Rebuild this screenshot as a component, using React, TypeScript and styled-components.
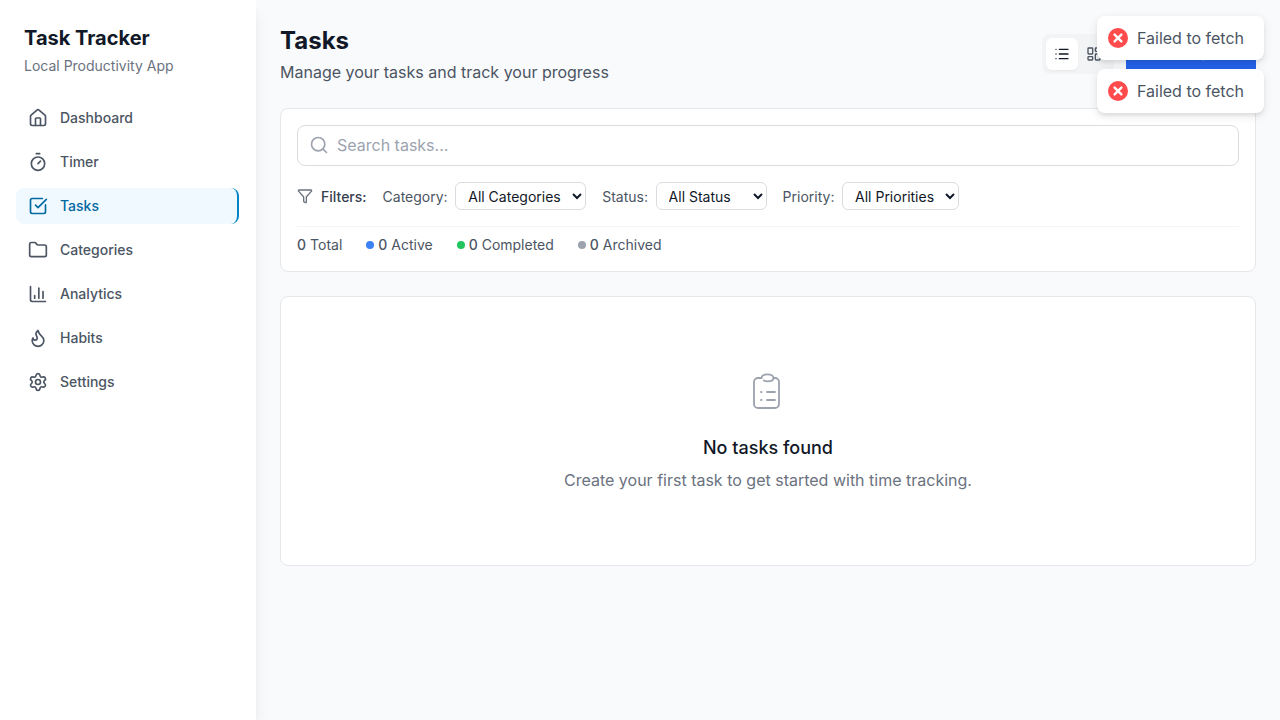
import React from "react";
import styled, { createGlobalStyle } from "styled-components";
import {
  BarChart3,
  CheckSquare,
  Filter,
  Flame,
  Folder,
  Home,
  LayoutDashboard,
  List,
  Search,
  Settings,
  Timer,
} from "lucide-react";

const navItems = [
  { label: "Dashboard", icon: Home },
  { label: "Timer", icon: Timer },
  { label: "Tasks", icon: CheckSquare, active: true },
  { label: "Categories", icon: Folder },
  { label: "Analytics", icon: BarChart3 },
  { label: "Habits", icon: Flame },
  { label: "Settings", icon: Settings },
];

const filters = [
  { label: "Category:", options: ["All Categories", "Work", "Personal"] },
  { label: "Status:", options: ["All Status", "Active", "Completed", "Archived"] },
  { label: "Priority:", options: ["All Priorities", "High", "Medium", "Low"] },
];

const stats = [
  { label: "Active", color: "#3b82f6" },
  { label: "Completed", color: "#22c55e" },
  { label: "Archived", color: "#9ca3af" },
];

function EmptyIcon() {
  return (
    <svg width="40" height="40" viewBox="0 0 40 40" fill="none" stroke="#9ca3af" strokeWidth="1.8" strokeLinecap="round">
      <path d="M13.5 7H10a4 4 0 0 0-4 4v22a4 4 0 0 0 4 4h17a4 4 0 0 0 4-4V11a4 4 0 0 0-4-4h-1.5" />
      <path d="M13.5 7c0-2.2 2.7-3.7 6-3.7s6 1.5 6 3.7-2.7 3.4-6 3.4c-1.6 0-3-.4-3.6-1" />
      <path d="M13 21h.6M13 29h.6M19 21h8M19 29h8" />
    </svg>
  );
}

export default function App() {
  return (
    <Layout>
      <GlobalStyle />
      <Sidebar>
        <Brand>
          <BrandName>Task Tracker</BrandName>
          <BrandTag>Local Productivity App</BrandTag>
        </Brand>
        <Nav>
          {navItems.map(({ label, icon: Icon, active }) => (
            <NavItem key={label} $active={active}>
              <Icon size={20} />
              {label}
            </NavItem>
          ))}
        </Nav>
      </Sidebar>

      <Main>
        <Header>
          <div>
            <Title>Tasks</Title>
            <Subtitle>Manage your tasks and track your progress</Subtitle>
          </div>
          <Actions>
            <ViewToggle>
              <ViewButton $active>
                <List size={16} />
              </ViewButton>
              <ViewButton>
                <LayoutDashboard size={16} />
              </ViewButton>
            </ViewToggle>
            <NewTaskButton>New Task</NewTaskButton>
          </Actions>
        </Header>

        <Card>
          <SearchBox>
            <SearchIcon size={20} />
            <SearchInput placeholder="Search tasks..." />
          </SearchBox>
          <FilterRow>
            <FilterTitle>
              <Filter size={16} color="#6b7280" />
              Filters:
            </FilterTitle>
            {filters.map((f) => (
              <FilterField key={f.label}>
                {f.label}
                <Select>
                  {f.options.map((o) => (
                    <option key={o}>{o}</option>
                  ))}
                </Select>
              </FilterField>
            ))}
          </FilterRow>
          <StatsRow>
            <Stat>
              <Count>0</Count> Total
            </Stat>
            {stats.map((s) => (
              <Stat key={s.label}>
                <Dot $color={s.color} />
                <span>
                  <Count>0</Count> {s.label}
                </span>
              </Stat>
            ))}
          </StatsRow>
        </Card>

        <EmptyCard>
          <EmptyIcon />
          <EmptyTitle>No tasks found</EmptyTitle>
          <EmptyText>Create your first task to get started with time tracking.</EmptyText>
        </EmptyCard>
      </Main>

      <Toasts>
        {[0, 1].map((i) => (
          <Toast key={i}>
            <ToastIcon viewBox="0 0 20 20">
              <circle cx="10" cy="10" r="10" fill="#ff4b4b" />
              <path d="M6.6 6.6l6.8 6.8M13.4 6.6l-6.8 6.8" stroke="#fff" strokeWidth="2.4" strokeLinecap="round" />
            </ToastIcon>
            Failed to fetch
          </Toast>
        ))}
      </Toasts>
    </Layout>
  );
}

const GlobalStyle = createGlobalStyle`
  html, body {
    margin: 0;
    padding: 0;
    background: #f9fafb;
    font-family: Inter, "Liberation Sans", sans-serif;
  }
  * {
    box-sizing: border-box;
  }
`;

const Layout = styled.div`
  position: relative;
  display: flex;
  height: 720px;
  overflow: hidden;
`;

const Sidebar = styled.aside`
  width: 256px;
  flex-shrink: 0;
  background: #fff;
  box-shadow: 0 10px 15px -3px rgba(0, 0, 0, 0.1), 0 4px 6px -4px rgba(0, 0, 0, 0.1);
`;

const Brand = styled.div`
  padding: 24px 24px 0;
`;

const BrandName = styled.h1`
  margin: 0;
  font-size: 20px;
  line-height: 28px;
  font-weight: 700;
  color: #111827;
`;

const BrandTag = styled.p`
  margin: 4px 0 0;
  font-size: 14px;
  line-height: 20px;
  color: #6b7280;
`;

const Nav = styled.nav`
  display: flex;
  flex-direction: column;
  gap: 8px;
  padding: 24px 16px 0;
`;

const NavItem = styled.a<{ $active?: boolean }>`
  display: flex;
  align-items: center;
  gap: 12px;
  height: 36px;
  padding: 0 12px;
  border-radius: 8px;
  font-size: 14px;
  line-height: 20px;
  font-weight: 500;
  color: ${(p) => (p.$active ? "#0369a1" : "#4b5563")};
  background: ${(p) => (p.$active ? "#f0f9ff" : "transparent")};
  border-right: ${(p) => (p.$active ? "2px solid #0284c7" : "none")};
  margin-right: 1px;
`;

const Main = styled.main`
  flex: 1;
  min-width: 0;
  padding: 24px;
`;

const Header = styled.header`
  display: flex;
  align-items: center;
  justify-content: space-between;
  margin-bottom: 24px;
`;

const Title = styled.h2`
  margin: 0;
  font-size: 24px;
  line-height: 34px;
  font-weight: 700;
  color: #111827;
`;

const Subtitle = styled.p`
  margin: 2px 0 0;
  font-size: 16px;
  line-height: 24px;
  color: #4b5563;
`;

const Actions = styled.div`
  display: flex;
  align-items: center;
  gap: 12px;
`;

const ViewToggle = styled.div`
  display: flex;
  padding: 4px;
  border-radius: 8px;
  background: #f3f4f6;
`;

const ViewButton = styled.button<{ $active?: boolean }>`
  display: flex;
  align-items: center;
  justify-content: center;
  width: 32px;
  height: 32px;
  padding: 0;
  border: none;
  border-radius: 6px;
  color: ${(p) => (p.$active ? "#111827" : "#4b5563")};
  background: ${(p) => (p.$active ? "#fff" : "transparent")};
  box-shadow: ${(p) => (p.$active ? "0 1px 2px rgba(0, 0, 0, 0.05)" : "none")};
`;

const NewTaskButton = styled.button`
  width: 130.4px;
  height: 30px;
  border: none;
  background: #2563eb;
  color: #fff;
  font: 500 14px Inter, sans-serif;
`;

const Card = styled.section`
  padding: 16px;
  background: #fff;
  border: 1px solid #e5e7eb;
  border-radius: 8px;
`;

const SearchBox = styled.div`
  position: relative;
`;

const SearchIcon = styled(Search)`
  position: absolute;
  left: 12px;
  top: 10px;
  color: #9ca3af;
`;

const SearchInput = styled.input`
  display: block;
  width: 100%;
  height: 41px;
  padding: 0 12px 2px 39px;
  border: 1px solid #d9dce1;
  border-radius: 8px;
  font: 400 16px Inter, sans-serif;
  outline: none;
  &::placeholder {
    color: #9ca3af;
  }
`;

const FilterRow = styled.div`
  display: flex;
  align-items: center;
  gap: 16px;
  margin-top: 16px;
  font-size: 14px;
`;

const FilterTitle = styled.div`
  display: flex;
  align-items: center;
  gap: 8px;
  font-weight: 500;
  color: #374151;
`;

const FilterField = styled.label`
  display: flex;
  align-items: center;
  gap: 7.6px;
  color: #4b5563;
`;

const Select = styled.select`
  height: 28px;
  padding: 0 8px 0 8px;
  border: 1px solid #d9dce1;
  border-radius: 6px;
  background: #fff;
  color: #111827;
  font: 400 14px Inter, sans-serif;
`;

const StatsRow = styled.div`
  display: flex;
  align-items: center;
  gap: 24px;
  margin-top: 16px;
  padding-top: 8px;
  border-top: 1px solid #f3f4f6;
  font-size: 14px;
  line-height: 20px;
  color: #4b5563;
`;

const Stat = styled.span`
  display: flex;
  align-items: center;
  gap: 4px;
`;

const Count = styled.span`
  font-weight: 500;
`;

const Dot = styled.span<{ $color: string }>`
  width: 8px;
  height: 8px;
  border-radius: 50%;
  background: ${(p) => p.$color};
`;

const EmptyCard = styled.section`
  display: flex;
  flex-direction: column;
  align-items: center;
  margin-top: 24px;
  height: 270px;
  padding-top: 74px;
  background: #fff;
  border: 1px solid #e5e7eb;
  border-radius: 8px;
`;

const EmptyTitle = styled.h3`
  margin: 23px 0 0;
  font-size: 18px;
  line-height: 28px;
  font-weight: 500;
  color: #111827;
`;

const EmptyText = styled.p`
  margin: 6px 0 0;
  font-size: 16px;
  line-height: 24px;
  color: #6b7280;
`;

const Toasts = styled.div`
  position: absolute;
  top: 16px;
  right: 16px;
  display: flex;
  flex-direction: column;
  gap: 9px;
`;

const Toast = styled.div`
  display: flex;
  align-items: center;
  gap: 9.5px;
  width: 167px;
  height: 44px;
  padding: 0 10px 0 10.5px;
  border-radius: 8px;
  background: #fff;
  color: #4b5563;
  font-size: 16px;
  box-shadow: 0 3px 10px rgba(0, 0, 0, 0.1), 0 3px 3px rgba(0, 0, 0, 0.05);
`;

const ToastIcon = styled.svg`
  width: 20px;
  height: 20px;
  margin-top: 0.6px;
  flex-shrink: 0;
`;
